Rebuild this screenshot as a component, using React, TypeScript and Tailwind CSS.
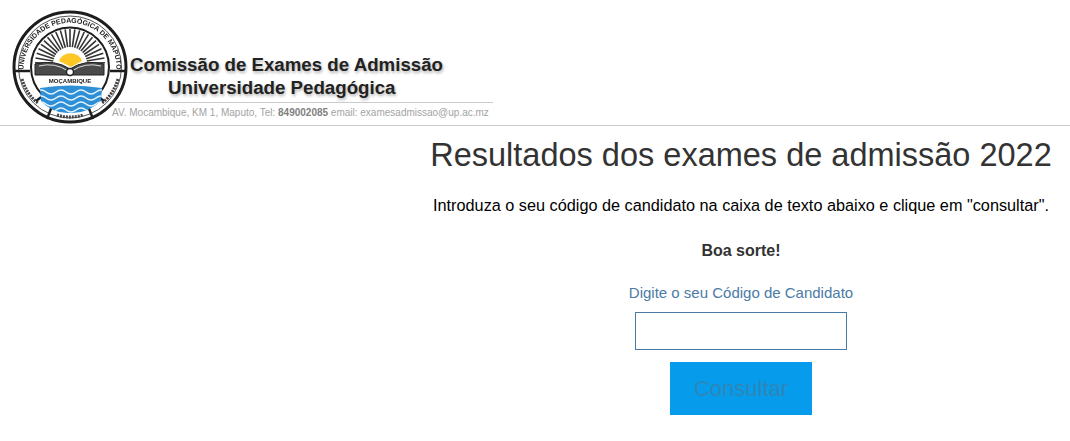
const rays = Array.from({ length: 23 }, (_, i) => -90 + (i - 11) * 8);

function Seal() {
  return (
    <svg width="120" height="117" viewBox="0 0 120 117" className="shrink-0 blur-[0.5px]">
      <defs>
        <path id="sealTop" d="M14 72 A46.5 46.5 0 1 1 104 72" />
        <clipPath id="waterClip">
          <path d="M29 79 Q59 74 91 79 L90 92 Q76 105 59 104 Q42 105 30 92 Z" />
        </clipPath>
      </defs>
      {/* outer ring with notches */}
      <ellipse cx="59" cy="58" rx="56" ry="55" fill="#fff" stroke="#1d1d1d" strokeWidth="3" />
      <ellipse cx="59" cy="58" rx="51.5" ry="51" fill="none" stroke="#555" strokeWidth="1" />
      <ellipse cx="59" cy="58" rx="39" ry="39.5" fill="#fff" stroke="#1d1d1d" strokeWidth="2" />
      <path d="M4 62 L19 62 M114 62 L99 62 M25 92 L33 86 M93 92 L85 86 M36 110 L41 97 M82 110 L77 97" stroke="#1d1d1d" strokeWidth="2.4" />
      <text fontFamily="Liberation Sans, sans-serif" fontSize="7" fontWeight="700" fill="#222">
        <textPath href="#sealTop" startOffset="50%" textAnchor="middle">UNIVERSIDADE PEDAGÓGICA DE MAPUTO</textPath>
      </text>
      {/* side and bottom banners, lettering too small to read */}
      <path d="M11 70 Q16 86 27 94" fill="none" stroke="#444" strokeWidth="3" strokeDasharray="2 1" />
      <path d="M107 70 Q102 86 91 94" fill="none" stroke="#444" strokeWidth="3" strokeDasharray="2 1" />
      <path d="M46 106 Q59 110 72 106" fill="none" stroke="#444" strokeWidth="3" strokeDasharray="2 1" />
      <g stroke="#333" strokeWidth="1.6">
        {rays.map((a) => {
          const r = (a * Math.PI) / 180;
          return (
            <line
              key={a}
              x1={59 + Math.cos(r) * 17}
              y1={55 + Math.sin(r) * 17}
              x2={59 + Math.cos(r) * 35}
              y2={55 + Math.sin(r) * 35}
            />
          );
        })}
      </g>
      <path d="M48 52 A12 11 0 0 1 71 52 L60 58 Z" fill="#fdc826" />
      <path d="M24 55 Q44 50 59 60 Q74 50 93 55 L93 66 L24 66 Z" fill="#4a4a4a" stroke="#222" strokeWidth="1" />
      <path d="M28 57 Q44 53 57 62" fill="none" stroke="#ddd" strokeWidth="1" />
      <path d="M90 57 Q74 53 61 62" fill="none" stroke="#ddd" strokeWidth="1" />
      <circle cx="59" cy="63" r="3.5" fill="#fff" stroke="#222" strokeWidth="1.4" />
      <text x="59" y="74" textAnchor="middle" fontFamily="Liberation Sans, sans-serif" fontSize="6" fontWeight="700" fill="#222">
        MOÇAMBIQUE
      </text>
      <g clipPath="url(#waterClip)">
        <rect x="25" y="74" width="70" height="32" fill="#2f8fd6" />
        <path
          d="M25 83 q5 -4 10 0 t10 0 t10 0 t10 0 t10 0 t10 0 t10 0 M25 89 q5 -4 10 0 t10 0 t10 0 t10 0 t10 0 t10 0 t10 0 M25 95 q5 -4 10 0 t10 0 t10 0 t10 0 t10 0 t10 0 t10 0 M25 101 q5 -4 10 0 t10 0 t10 0 t10 0 t10 0 t10 0 t10 0"
          fill="none"
          stroke="#e3f3fc"
          strokeWidth="1.5"
        />
      </g>
    </svg>
  );
}

export default function App() {
  return (
    <div className="min-h-[441px] bg-white font-['Liberation_Sans',Arial,sans-serif] text-[#333]">
      <header className="flex h-[126px] items-start border-b border-[#ccc] pt-[9px] pl-[11px]">
        <Seal />
        <div className="mt-[45px] w-[382px]">
          <p className="-ml-[1px] text-[18.7px] leading-[22px] font-bold whitespace-nowrap text-[#222] [text-shadow:1px_2px_3px_rgba(0,0,0,0.3)]">
            Comissão de Exames de Admissão
          </p>
          <p className="-ml-[1px] pl-[38px] text-[18.7px] leading-[24px] font-bold whitespace-nowrap text-[#222] [text-shadow:1px_2px_3px_rgba(0,0,0,0.3)]">
            Universidade Pedagógica
          </p>
          <div className="mt-[2px] -ml-[14px] w-[376px] border-t border-[#ccc] pt-[3px]">
            <p className="-ml-[5px] text-[10px] leading-[14px] whitespace-nowrap text-[#a3a3a3]">
              AV. Mocambique, KM 1, Maputo, Tel: <b className="text-[#808080]">849002085</b> email: examesadmissao@up.ac.mz
            </p>
          </div>
        </div>
      </header>
      <main className="ml-auto flex w-[658px] flex-col items-center text-center">
        <h1 className="mt-[11px] text-[32.5px] leading-[36px] font-normal whitespace-nowrap">
          Resultados dos exames de admissão 2022
        </h1>
        <p className="mt-[21px] text-[16.25px] leading-[22px] whitespace-nowrap text-black">
          Introduza o seu código de candidato na caixa de texto abaixo e clique em "consultar".
        </p>
        <p className="mt-[24px] text-[16px] leading-[22px] font-bold">Boa sorte!</p>
        <label className="mt-[21px] text-[15px] leading-[20px] text-[#4a7ba6]">Digite o seu Código de Candidato</label>
        <input type="text" className="mt-[9px] h-[38px] w-[212px] border border-[#4a7ba6] bg-white" />
        <button type="button" className="mt-[12px] h-[53px] w-[142px] bg-[#069ceb] text-[22px] text-[#2f86b8]">
          Consultar
        </button>
      </main>
    </div>
  );
}
